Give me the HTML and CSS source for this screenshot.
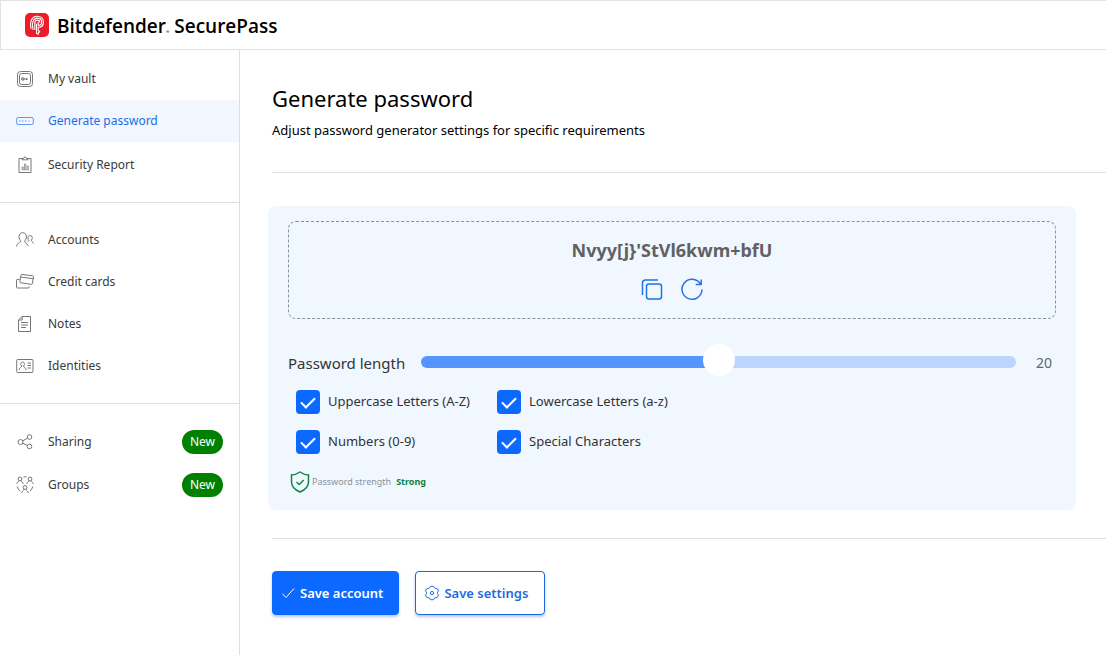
FILE: index.html
```html
<!DOCTYPE html>
<html lang="en">
<head>
<meta charset="utf-8">
<meta name="viewport" content="width=device-width, initial-scale=1">
<title>Bitdefender SecurePass</title>
<link rel="stylesheet" href="styles.css">
</head>
<body>
<div class="app">
  <header class="header">
    <svg class="logo" viewBox="0 0 24 24" aria-hidden="true">
      <rect width="24" height="24" rx="5" fill="#ed1c2b" stroke="none"/>
      <g fill="none" stroke="#fff" stroke-width="1.1" stroke-linecap="round" stroke-linejoin="round">
        <path d="M6 15.500C5.300 12.500 5.300 9.500 6.300 7.300 7.400 4.700 9.600 3.200 12.200 3.200c3.700 0 6.200 2.300 6.200 5.700 0 3.200-2.200 5.300-5.200 5.300v3.300l1.500 1.200-1.500 1.200v1.500l-1.700-1V11"/>
        <path d="M8 16.500C7.300 13.500 7.200 10.500 8 8.400 8.800 6.200 10.400 5.100 12.400 5.100c2.500 0 4.200 1.600 4.200 3.800 0 2.100-1.300 3.500-3.400 3.500V9"/>
        <path d="M9.800 16.500V10c0-1.800.8-2.900 2.300-2.900 1.400 0 2.600.7 2.600 1.900"/>
      </g>
    </svg>
    <span class="brand">Bitdefender<span class="reg">®</span> SecurePass</span>
  </header>
  <div class="body">
    <nav class="sidebar" aria-label="Main">
      <div class="group">
        <a class="item" href="#vault">
          <svg class="icon" viewBox="0 0 18 18"><rect x="1.500" y="1.500" width="15" height="15" rx="3"/><rect x="3.500" y="3.500" width="11" height="11" rx="2"/><circle cx="6.800" cy="9" r="1.300"/><path d="M5 9h7M10.500 8v2"/></svg>
          <span>My vault</span></a>
        <a class="item active" href="#generate" aria-current="page">
          <svg class="icon" viewBox="0 0 18 18"><rect x=".7" y="5.500" width="16.600" height="7" rx="1.500"/><path stroke-linecap="round" stroke-width="1.300" d="M4 9h.1M6.800 9h.1M9.600 9h.1"/><path d="M12.500 9h1"/></svg>
          <span>Generate password</span></a>
        <a class="item report" href="#report">
          <svg class="icon" viewBox="0 0 18 18"><path d="M6 2.500H3v14h12v-14h-3"/><path d="M6 3.800V2.500h1.500Q7.600 1 9 1t1.500 1.500H12v1.300z"/><path d="M6 14v-3h1.300v3zM8.500 14V8h1.300v6zM11 14v-4h1.300v4z" stroke-width=".7"/></svg>
          <span>Security Report</span></a>
      </div>
      <div class="group second">
        <a class="item" href="#accounts">
          <svg class="icon" viewBox="0 0 18 18"><path d="M4.800 10C3.600 9 3 7.500 3 5.800 3 3.300 4.500 1.700 6.700 1.700s3.700 1.600 3.700 4.100C10.400 7.500 9.800 9 8.700 10c-.2 2 2.300 1.800 3.300 4.800M4.800 10c0 1.800-3.600 1.500-4.300 5.500"/><path d="M12.900 9.300C11.300 7.500 11.700 4.500 14.100 4.500s2.800 3 1.300 4.800c-.2 1.400 1.700 1.200 2.100 3.200M12.900 9.300c0 .8-.8 1-1.400 1.600"/></svg>
          <span>Accounts</span></a>
        <a class="item" href="#cards">
          <svg class="icon" viewBox="0 0 18 18"><path d="M5.800 1.400l11 1.500q.8.100.7.900l-1.200 6.900q-.1.800-.9.700L4.500 9.700q-.8-.1-.7-.9L5 2.100q.1-.8.800-.7zM4.800 4l12.500 1.800"/><path d="M3.500 6.500H1.200q-.7 0-.7.700v7q0 .8.800.8h11q.7 0 .7-.7v-1"/></svg>
          <span>Credit cards</span></a>
        <a class="item" href="#notes">
          <svg class="icon" viewBox="0 0 18 18"><path d="M6.200 1.500h8.300v15h-12V5zM6.200 1.500V5H2.500M5 7.500h7M5 10h7M5 12.500h5"/></svg>
          <span>Notes</span></a>
        <a class="item" href="#identities">
          <svg class="icon" viewBox="0 0 18 18"><rect x=".7" y="2.500" width="16.300" height="13" rx="1"/><path d="M5.700 9C4.200 7.500 4.600 5 6.600 5s2.500 2.500.9 4c0 1.700 2.500 1.200 2.700 4M5.700 9c0 1.700-2.400 1.200-2.600 4M11.500 6h3.500M11.500 8.500h3.500M11.500 11h3.500"/></svg>
          <span>Identities</span></a>
      </div>
      <div class="group third">
        <a class="item" href="#sharing">
          <svg class="icon" viewBox="0 0 18 18"><circle cx="4.500" cy="9" r="2.500"/><circle cx="13.500" cy="4" r="2.300"/><circle cx="13.500" cy="13.500" r="2.300"/><path d="M6.800 7.800l4.700-2.600M6.800 10.200l4.700 2.300"/></svg>
          <span>Sharing</span><span class="badge">New</span></a>
        <a class="item" href="#groups">
          <svg class="icon" viewBox="0 0 18 18"><circle cx="4" cy="3" r="1.900"/><circle cx="14" cy="3" r="1.900"/><circle cx="9" cy="11.500" r="1.900"/><path d="M.8 8c0-2.300 1.900-1.600 2.300-3.300M7.200 8c0-2.300-1.900-1.600-2.300-3.300M10.800 8c0-2.300 1.900-1.600 2.300-3.300M17.200 8c0-2.300-1.900-1.600-2.300-3.300M5.800 17c0-2.300 1.900-2 2.300-3.800M12.200 17c0-2.300-1.900-2-2.300-3.800M7.500 1q1.500-.5 3 0M1.200 10.500q.5 2.500 2.800 4.500M16.800 10.500q-.5 2.500-2.800 4.500"/></svg>
          <span>Groups</span><span class="badge">New</span></a>
      </div>
    </nav>
    <main class="main">
      <h1 class="title">Generate password</h1>
      <p class="subtitle">Adjust password generator settings for specific requirements</p>
      <section class="section">
        <div class="card">
          <div class="result">
            <output class="password">Nvyy[j}'StVl6kwm+bfU</output>
            <div class="tools">
              <button class="tool" type="button" aria-label="Copy password"><svg viewBox="0 0 24 24"><path d="M2.500 18V6q0-3 3-3H18"/><rect x="6.500" y="7" width="15" height="15" rx="2.500"/></svg></button>
              <button class="tool" type="button" aria-label="Generate again"><svg viewBox="0 0 24 24"><path d="M20.500 7A10 10 0 1 0 22 12.500M21.200 2.500v5h-5.500"/></svg></button>
            </div>
          </div>
          <div class="length">
            <label for="length">Password length</label>
            <input class="slider" id="length" type="range" min="8" max="32" value="20">
            <output class="count" for="length">20</output>
          </div>
          <div class="options">
            <label class="option"><input type="checkbox" checked><span>Uppercase Letters (A-Z)</span></label>
            <label class="option"><input type="checkbox" checked><span>Lowercase Letters (a-z)</span></label>
            <label class="option"><input type="checkbox" checked><span>Numbers (0-9)</span></label>
            <label class="option"><input type="checkbox" checked><span>Special Characters</span></label>
          </div>
          <p class="strength">
            <svg viewBox="0 0 24 24" aria-hidden="true"><path d="M12 2Q8 4.800 3.500 5v7q0 6.500 8.500 10 8.500-3.500 8.500-10V5Q16 4.800 12 2z"/><path d="M8.500 12l2.700 2.500 4.500-4.500"/></svg>
            <span>Password strength</span> <strong>Strong</strong>
          </p>
        </div>
      </section>
      <div class="actions">
        <button class="btn primary" type="button"><svg viewBox="0 0 16 16"><path d="M2.500 8.800l3.500 3.700 8-9"/></svg>Save account</button>
        <button class="btn settings" type="button"><svg viewBox="0 0 16 16"><path d="M6.300 1.500Q8 .8 9.700 1.500q.3 1.800 2.100 1.900 1.700-.2 2.300 1.500.7 1.500-.4 2.300-.6.800 0 1.600 1.100.8.400 2.300-.6 1.700-2.300 1.500-1.800.1-2.100 1.900-1.700.7-3.400 0-.3-1.800-2.100-1.900-1.700.2-2.300-1.500-.7-1.500.4-2.300.6-.8 0-1.600-1.100-.8-.4-2.300.6-1.700 2.300-1.500 1.800-.1 2.100-1.900z"/><circle cx="8" cy="8" r="1.600"/></svg>Save settings</button>
      </div>
    </main>
  </div>
</div>
</body>
</html>
```
FILE: styles.css
```css
* { box-sizing: border-box; }

body {
  margin: 0;
  background: #fff;
  color: #000;
  font: 13px/20px "Noto Sans", "Segoe UI", sans-serif;
}

svg { display: block; flex: none; fill: none; stroke: currentColor; }
p, h1 { margin: 0; }

.app { min-height: 100vh; display: flex; flex-direction: column; }

.header {
  height: 50px;
  display: flex;
  align-items: center;
  gap: 8px;
  padding: 0 24px;
  border: 1px solid #e2e2e2;
  border-right: 0;
}
.logo { width: 24px; height: 24px; }
.brand { padding-top: 2px; font: 600 19px/24px "Open Sans", sans-serif; }
.reg { font-size: 4px; line-height: 1; }

.body { flex: 1; display: flex; }

.sidebar {
  width: 240px;
  flex: none;
  border-right: 1px solid #dedede;
  font-size: 12px;
}
.group { padding: 8px 0 16px; border-bottom: 1px solid #dedede; }
.group.second { padding-top: 16px; }
.group.third { display: grid; gap: 1px; padding-top: 17px; border: 0; }
.item {
  display: flex;
  align-items: center;
  gap: 14px;
  height: 42px;
  padding: 0 16px;
  color: #3a3a3a;
  text-decoration: none;
}
.item.active { background: #f2f6ff; color: #1a6fe8; }
.item.report { margin-top: 2px; }
.icon { width: 18px; height: 18px; color: #777; }
.active .icon { color: #5c98f2; }
.badge {
  margin-left: auto;
  padding: 2px 8px;
  border-radius: 12px;
  background: #008000;
  color: #fff;
}

.main { flex: 1; min-width: 0; padding: 32px 0 32px 32px; }
.title { font-size: 22px; font-weight: 400; line-height: 32px; }
.subtitle { margin-top: 6px; }
.section {
  margin: 32px 0;
  padding: 33px 30px 28px 0;
  border: solid #e0e0e0;
  border-width: 1px 0;
}
.card {
  margin-left: -4px;
  padding: 15px 20px;
  border-radius: 8px;
  background: #f1f7ff;
}
.result {
  display: flex;
  flex-direction: column;
  align-items: center;
  gap: 14px;
  height: 98px;
  padding-top: 15px;
  border: 1px dashed #8890a4;
  border-radius: 8px;
}
.password { font-size: 18px; font-weight: 700; line-height: 26px; color: #616161; }
.tools { display: flex; gap: 16px; }
.tool { padding: 0; border: 0; background: none; color: #2272e6; }
.tool svg { width: 24px; height: 24px; stroke-width: 1.5; }

.length {
  display: flex;
  align-items: center;
  gap: 16px;
  margin-top: 25px;
  color: #333;
  font-size: 15px;
}
.length label, .count { padding-top: 2px; }
.slider {
  flex: 1;
  min-width: 0;
  height: 36px;
  margin: 0;
  appearance: none;
  background: none;
}
.slider::-webkit-slider-runnable-track {
  height: 12px;
  border-radius: 6px;
  background: linear-gradient(90deg, #5695ff 50%, #bbd5ff 50%);
}
.slider::-webkit-slider-thumb {
  appearance: none;
  width: 32px;
  height: 32px;
  margin-top: -12px;
  border-radius: 50%;
  background: #fff;
}
.count { padding-inline: 4px; color: #666; font-size: 14px; }

.options {
  display: grid;
  grid-template-columns: 201px auto;
  justify-content: start;
  gap: 16px 0;
  margin-top: 10px;
  padding-left: 8px;
}
.option { display: flex; align-items: center; gap: 8px; color: #333; white-space: nowrap; }
.option span { padding-bottom: 2px; }
.option input {
  appearance: none;
  display: grid;
  place-items: center;
  width: 24px;
  height: 24px;
  margin: 0;
  border-radius: 4px;
  background: #0c69ff;
}
.option input:checked::before {
  content: "";
  width: 12px;
  height: 6px;
  margin-top: -2px;
  border: solid #fff;
  border-width: 0 0 2px 2px;
  rotate: -45deg;
}
.strength {
  display: flex;
  align-items: center;
  gap: 5px;
  margin-top: 16px;
  padding-bottom: 1px;
  color: #8b929b;
  font-size: 9px;
}
.strength svg { width: 24px; height: 24px; margin-right: -5px; color: #138549; stroke-width: 1.5; }
.strength strong { color: #0b7f3d; }

.actions { display: flex; gap: 16px; }
.btn {
  display: flex;
  align-items: center;
  gap: 4px;
  height: 44px;
  padding: 0 15px 0 7px;
  border: 1px solid #1c66d9;
  border-radius: 4px;
  background: #fff;
  color: #1f6be0;
  font: 600 13px/20px "Noto Sans", sans-serif;
  box-shadow: 0 2px 3px rgb(12 80 200 / 30%);
}
.btn.settings { padding: 0 16px 0 8px; }
.btn svg { width: 16px; height: 16px; }
.btn.primary { border-color: #0c69ff; background: #0c69ff; color: #fff; }
```
